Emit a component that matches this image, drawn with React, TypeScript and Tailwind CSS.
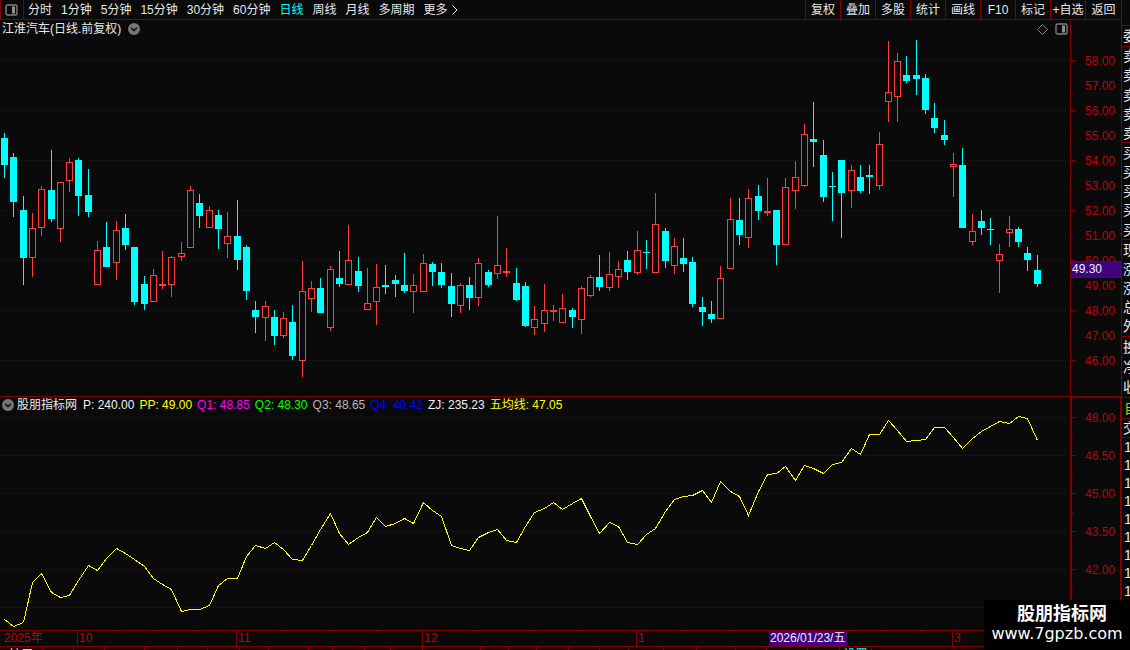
import React, { useState } from 'react';

type Dir = 'u' | 'd';
type Candle = [Dir, number, number, number, number];

// direction, high, body top, body bottom, low (chart units)
const CANDLES: Candle[] = [
  ['d', 133, 138, 165, 178], ['d', 153, 157, 202, 217], ['d', 196, 210, 258, 285], ['u', 213, 228, 258, 277],
  ['u', 186, 189, 228, 236], ['d', 150, 190, 219, 222], ['u', 182, 182, 229, 242], ['u', 158, 162, 181, 192],
  ['d', 158, 160, 196, 216], ['d', 169, 195, 212, 217], ['u', 241, 250, 285, 285], ['d', 222, 247, 267, 267],
  ['u', 221, 230, 263, 280], ['d', 214, 228, 245, 250], ['d', 247, 247, 302, 305], ['d', 276, 284, 304, 310],
  ['u', 269, 275, 302, 302], ['u', 251, 284, 286, 289], ['u', 256, 257, 285, 297], ['u', 242, 253, 257, 261],
  ['u', 186, 190, 248, 248], ['d', 194, 203, 216, 228], ['u', 206, 210, 228, 228], ['d', 210, 215, 229, 249],
  ['u', 212, 236, 244, 258], ['d', 200, 236, 260, 270], ['d', 245, 247, 291, 300], ['d', 301, 310, 317, 333],
  ['u', 301, 306, 318, 341], ['d', 310, 317, 336, 345], ['u', 312, 318, 336, 338], ['d', 305, 322, 356, 360],
  ['u', 261, 291, 361, 377], ['u', 281, 288, 299, 312], ['d', 278, 288, 313, 313], ['u', 266, 269, 328, 331],
  ['d', 251, 278, 284, 287], ['u', 225, 260, 285, 285], ['d', 257, 271, 286, 292], ['u', 268, 303, 310, 310],
  ['u', 264, 287, 302, 325], ['d', 265, 285, 287, 294], ['d', 275, 280, 284, 297], ['d', 253, 285, 291, 293],
  ['u', 274, 285, 292, 313], ['u', 254, 263, 292, 292], ['d', 262, 264, 272, 286], ['d', 263, 272, 285, 288],
  ['d', 273, 286, 304, 317], ['u', 283, 285, 306, 313], ['d', 277, 285, 298, 310], ['u', 258, 263, 298, 306],
  ['d', 270, 272, 285, 287], ['u', 216, 265, 274, 279], ['u', 248, 271, 273, 277], ['d', 268, 283, 300, 301],
  ['d', 282, 286, 326, 327], ['u', 306, 319, 328, 335], ['u', 284, 310, 324, 332], ['u', 305, 310, 312, 321],
  ['u', 294, 308, 323, 323], ['d', 308, 310, 317, 328], ['u', 286, 288, 320, 334], ['u', 275, 277, 296, 297],
  ['d', 255, 277, 287, 291], ['u', 252, 274, 288, 291], ['u', 261, 269, 277, 288], ['d', 251, 260, 272, 280],
  ['u', 231, 250, 273, 275], ['d', 240, 252, 253, 269], ['u', 193, 224, 273, 273], ['d', 228, 231, 261, 268],
  ['u', 238, 246, 266, 274], ['d', 238, 258, 264, 272], ['d', 257, 262, 304, 307], ['d', 297, 307, 312, 326],
  ['d', 301, 314, 319, 323], ['u', 266, 278, 319, 319], ['u', 198, 219, 269, 269], ['d', 198, 220, 235, 245],
  ['u', 189, 198, 238, 248], ['d', 185, 196, 211, 220], ['u', 178, 211, 213, 216], ['d', 210, 210, 245, 265],
  ['u', 178, 187, 245, 245], ['u', 161, 177, 191, 209], ['u', 124, 134, 186, 187], ['d', 102, 139, 142, 167],
  ['d', 140, 155, 197, 202], ['d', 172, 186, 187, 221], ['d', 160, 160, 193, 238], ['u', 165, 170, 191, 208],
  ['d', 165, 177, 191, 193], ['d', 165, 175, 177, 194], ['u', 132, 144, 186, 190], ['u', 41, 92, 102, 122],
  ['u', 53, 61, 97, 122], ['d', 56, 75, 81, 83], ['d', 40, 75, 79, 95], ['d', 74, 78, 110, 114],
  ['d', 103, 118, 128, 133], ['d', 120, 135, 140, 145], ['u', 153, 164, 167, 197], ['d', 148, 165, 228, 228],
  ['u', 214, 231, 242, 245], ['d', 210, 221, 228, 235], ['d', 218, 229, 230, 245], ['u', 244, 254, 261, 293],
  ['u', 216, 229, 233, 247], ['d', 227, 229, 242, 247], ['d', 247, 253, 260, 271], ['d', 255, 270, 284, 287],
];

// 五均线
const AVERAGE = [
  619, 626, 622, 582, 573, 592, 597, 595, 580, 565, 570, 558, 548, 553, 559, 566, 578, 584, 589, 611, 609, 609, 605,
  585, 578, 578, 556, 545, 548, 542, 549, 559, 560, 545, 529, 513, 533, 544, 537, 532, 517, 526, 523, 518, 523, 502,
  510, 516, 545, 548, 550, 537, 532, 529, 540, 542, 526, 512, 508, 502, 509, 503, 498, 516, 533, 522, 526, 542, 544,
  534, 528, 511, 499, 496, 495, 490, 502, 481, 491, 496, 515, 491, 474, 473, 466, 480, 465, 468, 473, 464, 462, 448,
  454, 434, 434, 420, 430, 441, 440, 439, 427, 427, 437, 448, 438, 431, 426, 421, 423, 416, 418, 440,
];

const PERIODS = ['分时', '1分钟', '5分钟', '15分钟', '30分钟', '60分钟', '日线', '周线', '月线', '多周期'];
const ACTIONS = ['复权', '叠加', '多股', '统计', '画线', 'F10', '标记', '+自选', '返回'];
const PRICES = [58, 57, 56, 55, 54, 53, 52, 51, 50, 49, 48, 47, 46];
const LEVELS = ['48.00', '', '46.50', '', '45.00', '', '43.50', '', '42.00', ''];

const READINGS = [
  { text: 'P: 240.00', color: 'text-[#f0f0f0]' },
  { text: 'PP: 49.00', color: 'text-[#ffff00]' },
  { text: 'Q1: 48.85', color: 'text-[#ff00ff]' },
  { text: 'Q2: 48.30', color: 'text-[#00ff00]' },
  { text: 'Q3: 48.65', color: 'text-[#b8b8b8]' },
  { text: 'Q4: 40.42', color: 'text-[#0000ff]' },
  { text: 'ZJ: 235.23', color: 'text-[#f0f0f0]' },
  { text: '五均线: 47.05', color: 'text-[#ffff00]' },
];

// the date axis runs under the price scale as well
const AXIS_SPAN = 1121;
const MONTHS = [
  { label: '2025年', span: 77 },
  { label: '10', span: 159 },
  { label: '11', span: 186 },
  { label: '12', span: 214 },
  { label: '1', span: 316 },
  { label: '3', span: 169 },
];
const WEEK_TICKS = [117, 157, 196, 283, 329, 376, 476, 529, 583, 683, 729, 855, 887, 920];
const TAB_EDGES = [
  0, 43, 74, 105, 145, 178, 208, 240, 269, 309, 333, 365, 391, 423, 481, 509, 537, 569, 600, 629, 664, 697, 736, 767,
  808, 840, 872, 1121,
];
const TAB_TEXT: Record<number, string> = { 0: '扩展', 25: '设置' };

const QUOTE_GROUPS = [
  { rows: ['委比'], grow: 20 },
  { rows: ['卖五', '卖四', '卖三', '卖二', '卖一'], grow: 97 },
  { rows: ['买一', '买二', '买三', '买四', '买五'], grow: 97 },
  { rows: ['现价', '涨跌', '涨幅', '总量', '外盘'], grow: 97 },
  { rows: ['换手', '净资', '收益'], grow: 61 },
];

const barX = (i: number) => Math.round(4.04 + i * 9.303);
const share = (span: number) => `${(span / AXIS_SPAN) * 100}%`;

const PanelIcon = () => (
  <svg width="13" height="12" viewBox="0 0 13 12" fill="none">
    <rect x="1" y="1" width="11" height="10" rx="1.5" stroke="#808080" strokeWidth="1.4" />
    <rect x="7" y="2.5" width="3" height="7" fill="#909090" />
  </svg>
);

const DropIcon = () => (
  <svg width="12" height="12" viewBox="0 0 12 12" fill="none">
    <circle cx="6" cy="6" r="6" fill="#777777" />
    <path d="M3 4.8 6 7.6 9 4.8" stroke="#111111" strokeWidth="1.5" />
  </svg>
);

const Grid = ({ rows, color }: { rows: number[]; color: string }) => (
  <>
    {rows.map((y) => (
      <path key={y} d={`M1 ${y + 0.5}H1067`} stroke={color} strokeDasharray="1 3" />
    ))}
  </>
);

const PriceChart = () => (
  <svg
    className="absolute inset-0 h-full w-full"
    viewBox="0 20 1070 376"
    preserveAspectRatio="none"
    shapeRendering="crispEdges"
    fill="none"
  >
    <Grid rows={[60, 110, 160, 210, 260, 310, 360]} color="#800000" />
    {CANDLES.map(([dir, high, top, bottom, low], i) => {
      const x = barX(i);
      if (dir === 'd') {
        return (
          <g key={i} fill="#00ffff">
            <rect x={x} y={high} width="1" height={low - high} />
            <rect x={x - 3} y={top} width="7" height={bottom - top} />
          </g>
        );
      }
      return (
        <g key={i}>
          <rect x={x} y={high} width="1" height={low - high} fill="#ff3c3c" />
          <rect x={x - 2.5} y={top + 0.5} width="6" height={bottom - top - 1} fill="#0a0a0a" stroke="#ff3c3c" />
        </g>
      );
    })}
  </svg>
);

const AverageChart = () => (
  <svg
    className="absolute inset-0 h-full w-full"
    viewBox="0 397 1070 233"
    preserveAspectRatio="none"
    shapeRendering="crispEdges"
    fill="none"
  >
    <Grid rows={[417, 455, 493, 531, 569, 607]} color="#5a1414" />
    <polyline points={AVERAGE.map((y, i) => `${barX(i) + 0.5},${y + 0.5}`).join(' ')} stroke="#ffff00" />
  </svg>
);

const QuoteStrip = () => (
  <aside className="w-[9px] shrink-0 overflow-hidden border-l border-[#800000] text-[#e8e8e8]">
    <div className="flex h-full w-10 flex-col">
      <div className="h-[25px] shrink-0" />
      {QUOTE_GROUPS.map((group) => (
        <div
          key={group.rows[0]}
          className="flex basis-0 flex-col border-t border-[#800000] pl-px"
          style={{ flexGrow: group.grow }}
        >
          {group.rows.map((row) => (
            <span key={row} className="flex min-h-0 flex-1 items-center text-sm leading-4">
              {row}
            </span>
          ))}
        </div>
      ))}
      <div className="flex h-[21px] shrink-0 items-center border-t border-[#800000] pl-[2px] text-sm text-[#c8c800]">
        自选
      </div>
      <div className="flex h-[20px] shrink-0 items-center border-y border-[#800000] pl-px text-sm">交易</div>
      <div className="flex h-[212px] shrink-0 flex-col pl-[2px] text-sm">
        {Array.from({ length: 9 }, (_, i) => (
          <span key={i} className="h-[18px] leading-[18px]">
            14
          </span>
        ))}
      </div>
    </div>
  </aside>
);

const App: React.FC = () => {
  const [period, setPeriod] = useState('日线');

  return (
    <div className="relative flex h-screen w-full overflow-hidden bg-[#0a0a0a] font-['Liberation_Sans','Noto_Sans_CJK_SC',sans-serif] text-xs text-[#e8e8e8]">
      <div className="flex min-w-0 flex-1 flex-col">
        {/* Toolbar */}
        <header className="flex h-5 shrink-0 border-b border-l border-[#800000]">
          <button aria-label="侧栏" className="flex w-[23px] shrink-0 items-center justify-center border-r border-[#800000] pr-[2px]">
            <PanelIcon />
          </button>
          <nav className="flex min-w-0 flex-1 items-center gap-[9px] overflow-hidden pl-1 whitespace-nowrap">
            {PERIODS.map((name) => (
              <button
                key={name}
                onClick={() => setPeriod(name)}
                className={name === period ? 'leading-[18px] text-[#00ffff]' : 'leading-[18px]'}
              >
                {name}
              </button>
            ))}
            <button className="flex items-center gap-1 leading-[18px]">
              更多
              <svg width="6" height="10" viewBox="0 0 6 10" fill="none">
                <path d="M.5.5 5 5 .5 9.5" stroke="#e8e8e8" />
              </svg>
            </button>
          </nav>
          <div className="flex shrink-0">
            {ACTIONS.map((name) => (
              <button
                key={name}
                className="w-[35px] border-l border-[#800000] text-center leading-[18px] whitespace-nowrap last:w-9"
              >
                {name}
              </button>
            ))}
          </div>
        </header>

        {/* Candles */}
        <section className="flex min-h-0 flex-[376]">
          <div className="relative min-w-0 flex-1">
            <PriceChart />
            <div className="relative flex h-[18px] items-center justify-between pr-[2px] pl-[2px]">
              <h1 className="flex items-center gap-[7px]">
                江淮汽车(日线.前复权)
                <button aria-label="展开">
                  <DropIcon />
                </button>
              </h1>
              <div className="flex items-center gap-[7px]">
                <svg width="11" height="11" viewBox="0 0 11 11" fill="none">
                  <path d="M5.5.5l5 5-5 5-5-5z" stroke="#808080" />
                </svg>
                <PanelIcon />
              </div>
            </div>
          </div>
          <div className="relative flex w-[51px] shrink-0 flex-col border-l border-[#800000] text-[#c00000]">
            <div className="flex-[28]" />
            {PRICES.map((price) => (
              <div key={price} className="flex min-h-0 flex-[25] items-center justify-between pr-[6px]">
                <span className={price % 2 ? 'h-px w-[2px] bg-[#800000]' : 'h-px w-[5px] bg-[#800000]'} />
                <span className="leading-3">{price}.00</span>
              </div>
            ))}
            <div className="flex-[23]" />
            <div
              className="absolute inset-x-0 h-[17px] border-y border-[#800000] bg-[#400080] pl-px leading-[15px] text-[#f0f0f0]"
              style={{ bottom: `${(118 / 376) * 100}%` }}
            >
              49.30
            </div>
          </div>
        </section>

        {/* Indicator */}
        <section className="flex min-h-0 flex-[234]">
          <div className="relative min-w-0 flex-1 border-t border-[#800000]">
            <AverageChart />
            <div className="relative flex h-4 items-center overflow-hidden pl-[2px] whitespace-nowrap">
              <button aria-label="指标">
                <DropIcon />
              </button>
              <span className="pr-[6px] pl-[3px]">股朋指标网</span>
              <div className="flex gap-[5px]">
                {READINGS.map((item) => (
                  <span key={item.text} className={item.color}>
                    {item.text}
                  </span>
                ))}
              </div>
            </div>
          </div>
          <div className="flex w-[51px] shrink-0 flex-col border-t-2 border-r border-l-2 border-[#800000] text-[#c00000]">
            <div className="flex-[10]" />
            {LEVELS.map((level, i) => (
              <div key={i} className="flex min-h-0 flex-[19] items-center justify-between pr-[5px]">
                <span className={level ? 'h-px w-1 bg-[#800000]' : 'h-px w-px bg-[#800000]'} />
                <span className="leading-3">{level}</span>
              </div>
            ))}
            <div className="flex-[32]" />
          </div>
        </section>

        {/* Dates */}
        <div className="relative h-4 shrink-0 border-t border-[#800000] leading-[15px] text-[#c00000]">
          <svg className="absolute inset-0 h-[2px] w-full" viewBox="0 0 1121 2" preserveAspectRatio="none">
            {WEEK_TICKS.map((x) => (
              <rect key={x} x={x} width="1" height="2" fill="#800000" />
            ))}
          </svg>
          <div className="flex h-full">
            {MONTHS.map((month) => (
              <span
                key={month.label}
                className="shrink-0 border-l border-[#800000] pl-px first:border-l-0 first:pl-1"
                style={{ width: share(month.span) }}
              >
                {month.label}
              </span>
            ))}
          </div>
          <span
            className="absolute inset-y-0 w-[78px] bg-[#400080] pl-px whitespace-nowrap text-[#f0f0f0]"
            style={{ left: share(769) }}
          >
            2026/01/23/五
          </span>
        </div>

        {/* Template tabs, cut off by the window edge */}
        <footer className="flex h-1 shrink-0 overflow-hidden border-t border-[#800000]">
          {TAB_EDGES.slice(1).map((edge, i) => (
            <button
              key={edge}
              className="h-4 shrink-0 overflow-hidden border-r border-[#800000] leading-[14px] whitespace-nowrap nth-26:text-[#00ffff]"
              style={{ width: share(edge - TAB_EDGES[i]) }}
            >
              {TAB_TEXT[i]}
            </button>
          ))}
        </footer>
      </div>

      <QuoteStrip />

      {/* Site badge */}
      <div className="absolute right-0 bottom-0 flex h-[50px] w-[146px] flex-col items-center bg-black pt-1 text-white">
        <span className="pl-[10px] text-lg leading-5 font-bold">股朋指标网</span>
        <a href="#" className="font-['DejaVu_Sans',sans-serif] text-base leading-5">
          www.7gpzb.com
        </a>
      </div>
    </div>
  );
};

export default App;
